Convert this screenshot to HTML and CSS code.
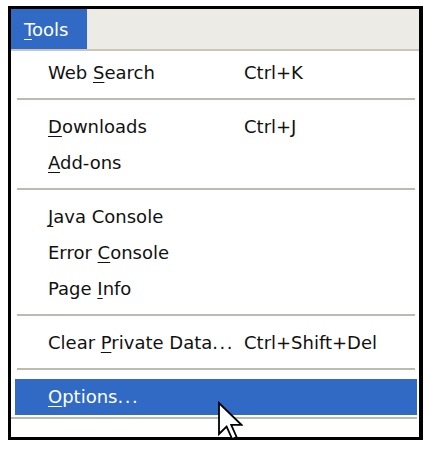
FILE: index.html
```html
<!DOCTYPE html>
<html>
<head>
<meta charset="utf-8">
<link rel="stylesheet" href="styles.css">
</head>
<body>
<div class="frame">
  <div class="menubar"><span class="tab"><u>T</u>ools</span></div>
  <div class="menu">
    <div class="item"><span class="label">Web <u>S</u>earch</span><span class="key">Ctrl+K</span></div>
    <div class="sep"></div>
    <div class="item"><span class="label"><u>D</u>ownloads</span><span class="key">Ctrl+J</span></div>
    <div class="item"><span class="label"><u>A</u>dd-ons</span></div>
    <div class="sep"></div>
    <div class="item"><span class="label"><u>J</u>ava Console</span></div>
    <div class="item"><span class="label">Error <u>C</u>onsole</span></div>
    <div class="item"><span class="label">Page <u>I</u>nfo</span></div>
    <div class="sep"></div>
    <div class="item"><span class="label">Clear <u>P</u>rivate Data<span class="dots">...</span></span><span class="key">Ctrl+Shift+Del</span></div>
    <div class="sep"></div>
    <div class="item active"><span class="label"><u>O</u>ptions<span class="dots">...</span></span></div>
    <div class="bottomline"></div>
  </div>
  <svg class="cursor" width="26" height="40" viewBox="0 0 13 20">
    <path d="M1 1 V16.5 L4.8 12.8 L7.6 19 L9.8 18 L7.1 11.9 H12.2 Z" fill="#fff" stroke="#000" stroke-width="0.9" stroke-linejoin="miter"/>
  </svg>
</div>
</body>
</html>
```

FILE: styles.css
```css
html, body {
  margin: 0;
  padding: 0;
  background: #fff;
}

body {
  font-family: "DejaVu Sans", "Liberation Sans", sans-serif;
  font-size: 18px;
  color: #111;
}

.frame {
  position: relative;
  margin: 6px 0 0 8px;
  width: 408px;
  border: 3px solid #000;
  border-right-width: 4px;
  background: #fff;
}

.menubar {
  height: 40px;
  background: #ecebe6;
  display: flex;
}

.tab {
  width: 76px;
  box-sizing: border-box;
  padding: 3px 0 0 13px;
  line-height: 36px;
  background: #316ac5;
  color: #fff;
}

u {
  text-decoration: underline;
  text-decoration-thickness: 1px;
  text-underline-offset: 3px;
}

.menu {
  border-top: 2px solid #c9c6bd;
  padding-top: 4px;
  padding-bottom: 18px;
}

.item {
  display: flex;
  height: 36px;
  line-height: 36px;
  margin: 0 2px 0 4px;
  padding-left: 33px;
  white-space: nowrap;
}

.label {
  width: 196px;
  flex: none;
}

.dots {
  letter-spacing: 1.5px;
}

.key {
  flex: none;
}

.item.active {
  background: #316ac5;
  color: #fff;
}

.sep {
  height: 2px;
  margin: 7px 4px 9px 6px;
  background: #bdbab0;
}

.bottomline {
  height: 2px;
  margin: 2px 2px 0 0;
  background: #bdbab0;
}

.cursor {
  position: absolute;
  left: 206px;
  top: 392px;
}
```
